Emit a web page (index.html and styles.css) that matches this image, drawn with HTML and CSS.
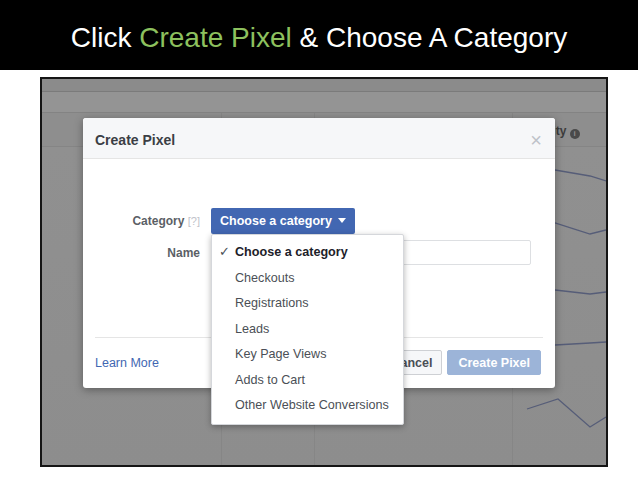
FILE: index.html
```html
<!DOCTYPE html>
<html lang="en">
<head>
    <meta charset="UTF-8">
    <title>Click Create Pixel &amp; Choose A Category</title>
    <link rel="stylesheet" href="styles.css">
</head>
<body>
    <header class="slide-title">
        Click <span class="accent">Create Pixel</span> &amp; Choose A Category
    </header>

    <main class="shot">
        <!-- dimmed pixel table behind the dialog -->
        <div class="table">
            <div class="row strip"></div>
            <div class="row band"></div>
            <div class="row head">
                <div class="cell"></div>
                <div class="cell"></div>
                <div class="cell"></div>
                <div class="cell head-title">Activity <span class="info">i</span></div>
            </div>
            <div class="row body">
                <div class="cell"></div>
                <div class="cell"></div>
                <div class="cell"></div>
                <div class="cell spark">
                    <svg width="93" height="318" viewBox="0 0 93 318">
                        <polyline points="0,22 42,23 77,29 93,34" />
                        <polyline points="0,72 42,76 77,87 93,83" />
                        <polyline points="0,139 42,143 77,147 93,145" />
                        <polyline points="0,199 42,198 77,196 93,195" />
                        <polyline points="14,262 45,252 77,280 93,270" />
                    </svg>
                </div>
            </div>
        </div>

        <div class="dialog">
            <div class="dialog-head">
                <h2>Create Pixel</h2>
                <span class="close">&times;</span>
            </div>

            <div class="dialog-body">
                <label class="field-label">Category <span class="hint">[?]</span></label>
                <div class="picker">
                    <button class="btn-select">Choose a category <span class="caret"></span></button>
                    <ul class="menu">
                        <li class="selected"><span class="check">&#10003;</span>Choose a category</li>
                        <li><span class="check"></span>Checkouts</li>
                        <li><span class="check"></span>Registrations</li>
                        <li><span class="check"></span>Leads</li>
                        <li><span class="check"></span>Key Page Views</li>
                        <li><span class="check"></span>Adds to Cart</li>
                        <li><span class="check"></span>Other Website Conversions</li>
                    </ul>
                </div>

                <label class="field-label">Name</label>
                <input type="text" class="name-input">
            </div>

            <div class="dialog-foot">
                <a class="learn">Learn More</a>
                <div class="actions">
                    <button class="btn">Cancel</button>
                    <button class="btn primary">Create Pixel</button>
                </div>
            </div>
        </div>
    </main>
</body>
</html>
```

FILE: styles.css
```css
body {
    margin: 0;
    background: #fff;
    font-family: "Liberation Sans", Arial, sans-serif;
}
.slide-title {
    height: 70px;
    background: #000;
    color: #fff;
    font-size: 28px;
    line-height: 76px;
    text-align: center;
}
.accent {
    color: #8dc15e;
}

.shot {
    position: relative;
    box-sizing: border-box;
    width: 568px;
    height: 390px;
    margin: 7px 0 0 40px;
    border: 2px solid #151515;
    background: #8f8f8f;
    overflow: hidden;
}
.table {
    display: flex;
    flex-direction: column;
    height: 100%;
}
.row {
    display: grid;
    grid-template-columns: 180px 93px 198px 1fr;
}
.row.strip {
    height: 12px;
    background: #8b8b8b;
    border-bottom: 1px solid #7b7b7b;
}
.row.band {
    height: 21px;
    background: #949494;
    border-bottom: 1px solid #838383;
}
.row.head {
    height: 33px;
    background: #8e8e8e;
    border-bottom: 1px solid #858585;
}
.row.body {
    flex: 1;
    background: linear-gradient(#909090, #8d8d8d);
}
.cell {
    border-right: 1px solid #868686;
}
.cell:last-child {
    border-right: none;
}
.head-title {
    padding-left: 10px;
    font-size: 12px;
    font-weight: bold;
    line-height: 36px;
    color: #3d3d3d;
}
.info {
    display: inline-block;
    width: 10px;
    height: 10px;
    border-radius: 50%;
    background: #4a4a4a;
    color: #8e8e8e;
    font-size: 8px;
    line-height: 10px;
    text-align: center;
    vertical-align: -1px;
}
.spark svg {
    display: block;
}
.spark polyline {
    fill: none;
    stroke: #565d78;
    stroke-width: 1.3;
}

/* dialog on top of the dimmed page */
.dialog {
    position: absolute;
    left: 41px;
    top: 39px;
    width: 472px;
    background: #fff;
    border-radius: 3px;
    box-shadow: 0 2px 8px rgba(0, 0, 0, 0.35);
}
.dialog-head {
    display: flex;
    align-items: center;
    justify-content: space-between;
    box-sizing: border-box;
    height: 41px;
    padding: 3px 13px 0 12px;
    background: #f6f7f9;
    border-bottom: 1px solid #e5e5e5;
    border-radius: 3px 3px 0 0;
}
.dialog-head h2 {
    margin: 0;
    font-size: 14px;
    color: #3b3e45;
}
.close {
    font-size: 20px;
    color: #bec2c9;
    line-height: 1;
}
.dialog-body {
    display: grid;
    grid-template-columns: 117px 320px;
    column-gap: 11px;
    row-gap: 6px;
    align-items: center;
    align-content: start;
    box-sizing: border-box;
    height: 178px;
    padding-top: 49px;
}
.field-label {
    text-align: right;
    font-size: 12px;
    font-weight: bold;
    color: #5b5f66;
}
.hint {
    font-weight: normal;
    font-size: 11px;
    color: #bfc3ca;
}
.picker {
    position: relative;
}
.btn-select {
    height: 26px;
    padding: 0 9px;
    border: none;
    border-radius: 2px;
    background: #4267b2;
    color: #fff;
    font-family: inherit;
    font-size: 12.5px;
    font-weight: bold;
}
.caret {
    display: inline-block;
    margin-left: 3px;
    border-left: 4px solid transparent;
    border-right: 4px solid transparent;
    border-top: 5px solid #fff;
    vertical-align: 2px;
}
.name-input {
    box-sizing: border-box;
    width: 320px;
    height: 25px;
    border: 1px solid #dddfe2;
    border-radius: 2px;
}

.menu {
    position: absolute;
    z-index: 2;
    top: 26px;
    left: 0;
    width: 193px;
    margin: 0;
    padding: 4px 0 5px;
    list-style: none;
    background: #fff;
    border: 1px solid #d5d7db;
    border-radius: 2px;
    box-shadow: 0 2px 6px rgba(0, 0, 0, 0.3);
    box-sizing: border-box;
}
.menu li {
    padding-left: 7px;
    font-size: 12.6px;
    line-height: 25.5px;
    color: #4b4f56;
    white-space: nowrap;
}
.menu li.selected {
    font-weight: bold;
    color: #1d2129;
}
.check {
    display: inline-block;
    width: 16px;
    font-weight: normal;
    font-size: 13px;
    color: #4b4f56;
}

.dialog-foot {
    display: flex;
    align-items: center;
    justify-content: space-between;
    margin: 0 12px;
    padding: 12px 2px 13px 0;
    border-top: 1px solid #e5e5e5;
}
.learn {
    font-size: 12.5px;
    color: #4267b2;
}
.actions {
    display: flex;
    gap: 5px;
}
.btn {
    height: 25px;
    padding: 0 9px;
    border: 1px solid #ced0d4;
    border-radius: 2px;
    background: #f6f7f9;
    color: #4b4f56;
    font-family: inherit;
    font-size: 12.5px;
    font-weight: bold;
}
.btn.primary {
    padding: 0 10px;
    border-color: #9cb4d8;
    background: #9cb4d8;
    color: #fff;
}
```
